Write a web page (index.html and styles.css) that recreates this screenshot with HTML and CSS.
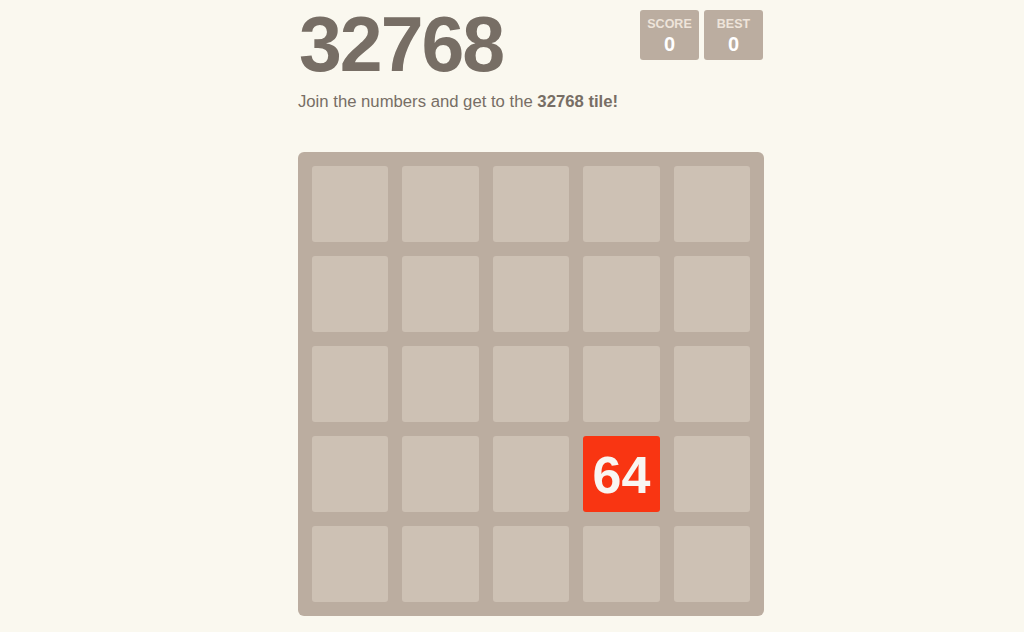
FILE: index.html
```html
<!DOCTYPE html>
<html>
<head>
<meta charset="utf-8">
<link rel="stylesheet" href="styles.css">
</head>
<body>
<div class="container">
  <div class="heading">
    <h1 class="title">32768</h1>
    <div class="scores">
      <div class="score-box"><div class="label">SCORE</div><div class="value">0</div></div>
      <div class="score-box"><div class="label">BEST</div><div class="value">0</div></div>
    </div>
  </div>
  <p class="intro">Join the numbers and get to the <strong>32768 tile!</strong></p>
  <div class="board">
    <div class="cell"></div><div class="cell"></div><div class="cell"></div><div class="cell"></div><div class="cell"></div>
    <div class="cell"></div><div class="cell"></div><div class="cell"></div><div class="cell"></div><div class="cell"></div>
    <div class="cell"></div><div class="cell"></div><div class="cell"></div><div class="cell"></div><div class="cell"></div>
    <div class="cell"></div><div class="cell"></div><div class="cell"></div><div class="cell tile-64">64</div><div class="cell"></div>
    <div class="cell"></div><div class="cell"></div><div class="cell"></div><div class="cell"></div><div class="cell"></div>
  </div>
</div>
</body>
</html>
```
FILE: styles.css
```css
html, body {
  margin: 0;
  padding: 0;
  background: #faf8ef;
  font-family: "Liberation Sans", Arial, sans-serif;
  color: #776e65;
}
.container {
  width: 466px;
  margin-left: 298px;
}
.heading {
  display: flex;
  justify-content: space-between;
  align-items: flex-start;
  height: 88px;
}
.title {
  margin: 0;
  font-size: 77px;
  font-weight: bold;
  line-height: 88px;
  padding-left: 1px;
  letter-spacing: -2px;
}
.scores {
  display: flex;
  gap: 5px;
  margin-top: 10px;
  margin-right: 1px;
}
.score-box {
  width: 59px;
  height: 50px;
  background: #bbada0;
  border-radius: 3px;
  display: flex;
  flex-direction: column;
  align-items: center;
  box-sizing: border-box;
  padding-top: 8px;
}
.label {
  font-size: 12.5px;
  font-weight: bold;
  color: #eee4da;
  line-height: 13px;
}
.value {
  font-size: 20px;
  font-weight: bold;
  color: #fff;
  line-height: 22px;
  margin-top: 2px;
}
.intro {
  margin: 0;
  font-size: 16.7px;
  line-height: 24px;
  height: 64px;
  padding-top: 2px;
  box-sizing: border-box;
}
.intro strong {
  font-weight: bold;
}
.board {
  background: #bbada0;
  border-radius: 6px;
  width: 466px;
  height: 464px;
  box-sizing: border-box;
  padding: 14px;
  display: grid;
  grid-template-columns: repeat(5, 1fr);
  grid-template-rows: repeat(5, 1fr);
  gap: 14px 14px;
}
.cell {
  background: #cdc1b4;
  border-radius: 3px;
  display: flex;
  align-items: center;
  justify-content: center;
}
.tile-64 {
  background: #f93512;
  color: #f9f6f2;
  font-size: 52px;
  font-weight: bold;
  padding-top: 2px;
  box-sizing: border-box;
}
```
